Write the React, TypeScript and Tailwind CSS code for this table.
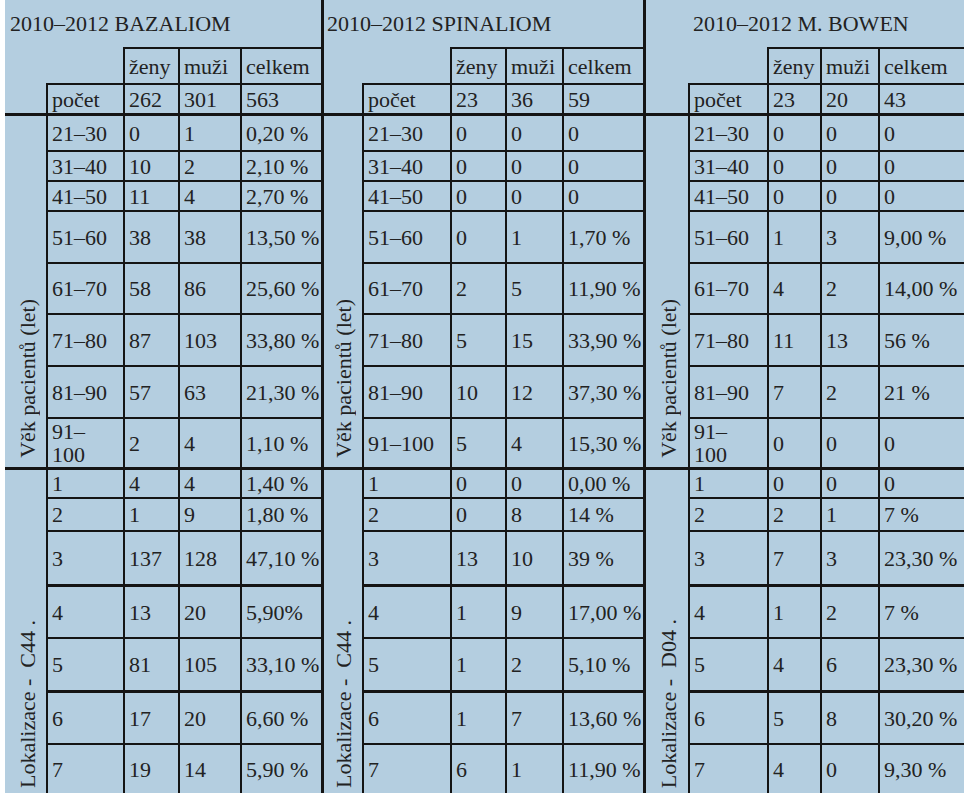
import React from 'react';

type Row = [string, React.ReactNode, string, string, string];

type Section = {
  title: string;
  titleClass: string;
  gridClass: string;
  count: [string, string, string];
  age: Row[];
  ageLabelClass: string;
  locLabel: string;
  loc: Row[];
};

const rowsTemplate =
  'grid grid-rows-[47px_36px_30px_37px_30px_30px_52px_51px_52px_52px_50px_30px_33px_54px_53px_53px_53px_50px]';

const sections: Section[] = [
  {
    title: '2010–2012 BAZALIOM',
    titleClass: 'pl-[5px]',
    gridClass: 'grid-cols-[41px_77px_55px_62px_81px]',
    count: ['262', '301', '563'],
    ageLabelClass: 'pl-[4px]',
    age: [
      ['21–30', '0', '1', '0,20 %', ''],
      ['31–40', '10', '2', '2,10 %', ''],
      ['41–50', '11', '4', '2,70 %', ''],
      ['51–60', '38', '38', '13,50 %', ''],
      ['61–70', '58', '86', '25,60 %', ''],
      ['71–80', '87', '103', '33,80 %', ''],
      ['81–90', '57', '63', '21,30 %', ''],
      ['91–100', '2', '4', '1,10 %', 'wrap'],
    ].map((r) => [r[0], r[1], r[2], r[3], r[4]] as Row),
    locLabel: 'Lokalizace -  C44 .',
    loc: [
      ['1', '4', '4', '1,40 %', ''],
      ['2', '1', '9', '1,80 %', ''],
      ['3', '137', '128', '47,10 %', ''],
      ['4', '13', '20', '5,90%', ''],
      ['5', '81', '105', '33,10 %', ''],
      ['6', '17', '20', '6,60 %', ''],
      ['7', '19', '14', '5,90 %', ''],
    ],
  },
  {
    title: '2010–2012 SPINALIOM',
    titleClass: 'pl-[3px]',
    gridClass: 'grid-cols-[38px_88px_55px_57px_81px] border-l-[3px] border-[#141414]',
    count: ['23', '36', '59'],
    ageLabelClass: 'pl-[2px]',
    age: [
      ['21–30', '0', '0', '0', ''],
      ['31–40', '0', '0', '0', ''],
      ['41–50', '0', '0', '0', ''],
      ['51–60', '0', '1', '1,70 %', ''],
      ['61–70', '2', '5', '11,90 %', ''],
      ['71–80', '5', '15', '33,90 %', ''],
      ['81–90', '10', '12', '37,30 %', ''],
      ['91–100', '5', '4', '15,30 %', ''],
    ],
    locLabel: 'Lokalizace -  C44 .',
    loc: [
      ['1', '0', '0', '0,00 %', ''],
      ['2', '0', '8', '14 %', ''],
      ['3', '13', '10', '39 %', ''],
      ['4', '1', '9', '17,00 %', ''],
      ['5', '1', '2', '5,10 %', ''],
      ['6', '1', '7', '13,60 %', ''],
      ['7', '6', '1', '11,90 %', ''],
    ],
  },
  {
    title: '2010–2012 M. BOWEN',
    titleClass: 'pl-[47px]',
    gridClass: 'grid-cols-[42px_79px_53px_58px_86px] border-l-[3px] border-[#141414]',
    count: ['23', '20', '43'],
    ageLabelClass: 'pl-[4px]',
    age: [
      ['21–30', '0', '0', '0', ''],
      ['31–40', '0', '0', '0', ''],
      ['41–50', '0', '0', '0', ''],
      ['51–60', '1', '3', '9,00 %', ''],
      ['61–70', '4', '2', '14,00 %', ''],
      ['71–80', '11', '13', '56 %', ''],
      ['81–90', '7', '2', '21 %', ''],
      ['91–100', '0', '0', '0', 'wrap'],
    ],
    locLabel: 'Lokalizace -  D04 .',
    loc: [
      ['1', '0', '0', '0', ''],
      ['2', '2', '1', '7 %', ''],
      ['3', '7', '3', '23,30 %', ''],
      ['4', '1', '2', '7 %', ''],
      ['5', '4', '6', '23,30 %', ''],
      ['6', '5', '8', '30,20 %', ''],
      ['7', '4', '0', '9,30 %', ''],
    ],
  },
];

function Cell({ children, thick }: { children: React.ReactNode; thick?: boolean }) {
  return (
    <div
      className={
        thick
          ? 'flex items-center overflow-hidden whitespace-nowrap border-l-2 border-t-[3px] border-[#141414] pl-[4px]'
          : 'flex items-center overflow-hidden whitespace-nowrap border-l-2 border-t-2 border-[#141414] pl-[4px]'
      }
    >
      {children}
    </div>
  );
}

function AgeLabel({ children }: { children: React.ReactNode }) {
  return <div className="leading-[1.05]">{children}</div>;
}

function SectionGrid({ s }: { s: Section }) {
  return (
    <div className={`${rowsTemplate} ${s.gridClass}`}>
      <div className={`col-span-5 flex items-center whitespace-nowrap ${s.titleClass}`}>{s.title}</div>

      <div className="col-span-2" />
      <Cell>ženy</Cell>
      <Cell>muži</Cell>
      <Cell>celkem</Cell>

      <div />
      <Cell>počet</Cell>
      {s.count.map((c, i) => (
        <Cell key={i}>{c}</Cell>
      ))}

      <div className={`row-span-8 flex items-end justify-center border-t-[3px] border-[#141414] pb-[9px] ${s.ageLabelClass}`}>
        <span className="rotate-180 whitespace-nowrap leading-none [writing-mode:vertical-rl]">Věk pacientů (let)</span>
      </div>
      {s.age.map((r, i) => (
        <React.Fragment key={i}>
          <Cell thick={i === 0}>
            {r[4] === 'wrap' ? (
              <AgeLabel>
                91–
                <br />
                100
              </AgeLabel>
            ) : (
              r[0]
            )}
          </Cell>
          <Cell thick={i === 0}>{r[1]}</Cell>
          <Cell thick={i === 0}>{r[2]}</Cell>
          <Cell thick={i === 0}>{r[3]}</Cell>
        </React.Fragment>
      ))}

      <div className={`row-span-7 flex items-end justify-center border-t-[3px] border-[#141414] pb-[5px] ${s.ageLabelClass}`}>
        <span className="rotate-180 whitespace-pre leading-none [writing-mode:vertical-rl]">{s.locLabel}</span>
      </div>
      {s.loc.map((r, i) => {
        const thick = i === 0 || i === 3 || i === 5;
        return (
          <React.Fragment key={i}>
            <Cell thick={thick}>{r[0]}</Cell>
            <Cell thick={thick}>{r[1]}</Cell>
            <Cell thick={thick}>{r[2]}</Cell>
            <Cell thick={thick}>{r[3]}</Cell>
          </React.Fragment>
        );
      })}
    </div>
  );
}

export default function App() {
  return (
    <div className="h-[800px] w-[964px] bg-white font-['Liberation_Serif',serif] text-[22px] text-[#222]">
      <div className="ml-[5px] flex w-[959px] bg-[#b4cee0]">
        {sections.map((s, i) => (
          <SectionGrid key={i} s={s} />
        ))}
      </div>
    </div>
  );
}
